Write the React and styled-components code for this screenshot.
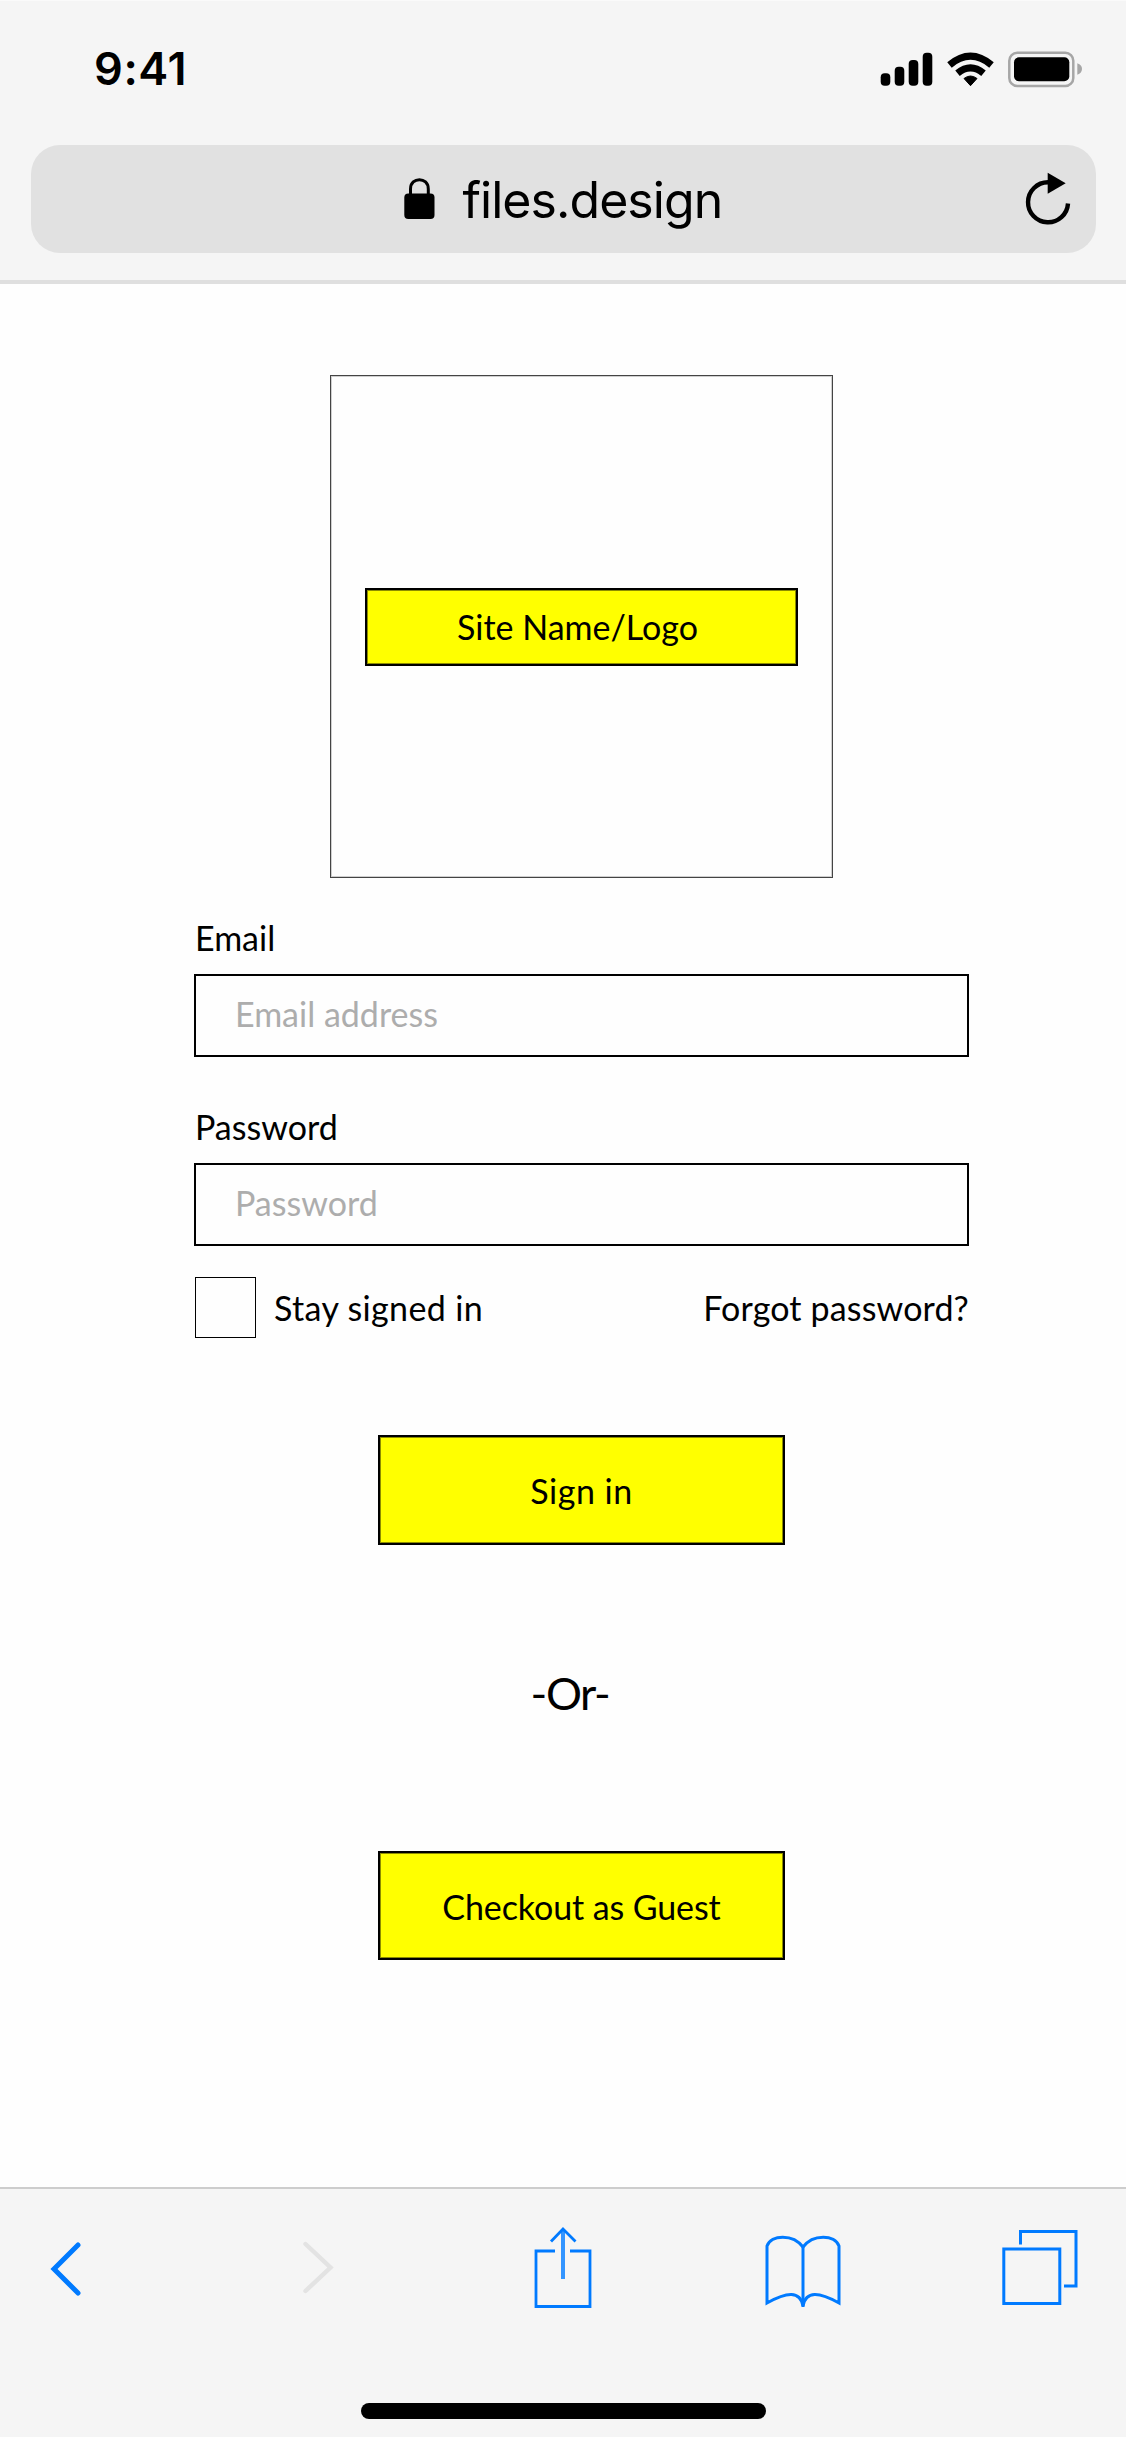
import React from "react";
import styled, { createGlobalStyle } from "styled-components";

const blue = "#007aff";

const GlobalStyle = createGlobalStyle`
  *, *::before, *::after { box-sizing: border-box; }
  body { margin: 0; background: #fefefe; }
`;

const Screen = styled.div`
  display: grid;
  grid-template-rows: 284px 1903px 250px;
  width: 1126px;
  height: 2437px;
  background: #fefefe;
  color: #000;
  font-family: Lato, "Noto Sans", sans-serif;
  font-size: 34px;
  line-height: 46px;
`;

const BrowserHeader = styled.header`
  display: flex;
  flex-direction: column;
  background: #f5f5f5;
  border-top: 1px solid #fafafa;
  border-bottom: 4px solid #dfdfdf;
`;

const StatusBar = styled.div`
  display: flex;
  justify-content: space-between;
  align-items: center;
  height: 136px;
  padding: 0 43px 0 94px;
`;

const Time = styled.span`
  font: 600 45px/60px Inter, sans-serif;
  letter-spacing: 0.6px;
`;

const AddressBar = styled.div`
  display: flex;
  align-items: center;
  height: 108px;
  margin: 7.5px 30.5px 0;
  padding: 0 25px 0 373px;
  border-radius: 29px;
  background: #e1e1e1;
`;

const Address = styled.span`
  margin: 2px auto 0 28px;
  font: 400 50px/60px Inter, sans-serif;
  letter-spacing: -0.95px;
`;

const Icon = styled.svg`
  display: block;
  flex: none;
  fill: none;
  stroke: ${(p) => p.$color || "none"};
  stroke-width: ${(p) => p.$weight || 0};
`;

const Main = styled.main`
  display: flex;
  flex-direction: column;
  align-items: center;
  padding: 91px 157px 0 194px;
`;

const LogoFrame = styled.div`
  display: flex;
  align-items: center;
  justify-content: center;
  width: 503px;
  height: 503px;
  border: 1px solid #444;
  box-shadow: inset 0 0 0 1px #cfcfcf;
`;

const YellowBox = styled.div`
  display: flex;
  align-items: center;
  justify-content: center;
  width: 433px;
  height: 78px;
  padding-right: 8px;
  border: 2px solid #000;
  box-shadow: inset 0 0 0 1px rgba(0, 0, 0, 0.45);
  background: #ff0;
`;

const Text = styled.span`
  white-space: nowrap;
  letter-spacing: ${(p) => p.$spacing || 0}px;
`;

const Form = styled.form`
  display: flex;
  flex-direction: column;
  align-items: center;
  width: 775px;
  margin-top: 37px;
`;

const Field = styled.label`
  display: flex;
  flex-direction: column;
  gap: 13px;
  width: 100%;
  margin-bottom: ${(p) => p.$after}px;
`;

const FieldName = styled.span`
  padding-left: 1px;
`;

const Input = styled.input`
  width: 100%;
  height: 83px;
  padding: 0 39px 5px;
  border: 2px solid #000;
  border-radius: 0;
  outline: none;
  background: #fefefe;
  font: inherit;
  &::placeholder { color: #adadad; opacity: 1; }
`;

const Options = styled.div`
  display: flex;
  align-items: center;
  width: 100%;
  height: 61px;
  padding-left: 1px;
`;

const Checkbox = styled.input`
  appearance: none;
  width: 61px;
  height: 61px;
  margin: 0 18px 0 0;
  border: 1px solid #000;
  background: #fefefe;
`;

const StaySignedIn = styled.label`
  display: flex;
  align-items: center;
  margin-right: auto;
`;

const ActionButton = styled.button`
  width: 407px;
  height: ${(p) => p.$height}px;
  margin-top: ${(p) => p.$before}px;
  padding: 2px 0 0;
  border: 2px solid #000;
  border-radius: 0;
  box-shadow: inset 0 0 0 1px rgba(0, 0, 0, 0.45);
  background: #ff0;
  color: #000;
  font: inherit;
`;

const Divider = styled.div`
  margin: 118px 23px 0 0;
  font-size: 45px;
  line-height: 60px;
  letter-spacing: -1.4px;
`;

const BottomBar = styled.footer`
  display: flex;
  flex-direction: column;
  justify-content: space-between;
  align-items: center;
  padding-bottom: 18px;
  border-top: 2px solid #cdcdcd;
  background: #f5f5f5;
`;

const Tools = styled.nav`
  display: grid;
  grid-template-columns: 250px 230px 230px 236px auto;
  width: 100%;
  padding: 31px 0 0 50px;
`;

const HomeIndicator = styled.div`
  width: 405px;
  height: 16px;
  border-radius: 8px;
  background: #000;
`;

export default function App() {
  return (
    <Screen>
      <GlobalStyle />
      <BrowserHeader>
        <StatusBar>
          <Time>9:41</Time>
          <Icon width="203" height="37" viewBox="880 51 203 37">
            <g fill="#000">
              <rect x="880.7" y="73.3" width="9.6" height="12.5" rx="4" />
              <rect x="894.7" y="66.7" width="9.6" height="19.1" rx="4" />
              <rect x="908.7" y="60" width="9.6" height="25.8" rx="4" />
              <rect x="922.7" y="52.7" width="9.6" height="33.1" rx="4" />
              <path d="M964 78.5Q970.5 73.5 977 78.5L970.5 85.7Z" stroke="#000" strokeWidth="1" strokeLinejoin="round" />
              <rect x="1014" y="57.3" width="55.3" height="24" rx="5" />
            </g>
            <g stroke="#000" strokeWidth="7">
              <path d="M949.5 65Q970.5 47.4 991.5 65" />
              <path d="M957.5 73.2Q970.5 62.4 983.5 73.2" />
            </g>
            <rect x="1009.3" y="52.7" width="64" height="33.3" rx="8" stroke="#a6a6a6" strokeWidth="2.5" />
            <path d="M1077.3 63.3Q1082 65 1082 69Q1082 73 1077.3 74.7Z" fill="#a6a6a6" />
          </Icon>
        </StatusBar>
        <AddressBar>
          <Icon width="31" height="42" viewBox="404 177 31 42">
            <rect x="404.3" y="192.5" width="30.2" height="25.5" rx="4" fill="#000" />
            <path d="M410.5 194V188C410.5 175.5 428.3 175.5 428.3 188V194" stroke="#000" strokeWidth="3" />
          </Icon>
          <Address>files.design</Address>
          <Icon width="46" height="54" viewBox="1025 171 46 54">
            <path d="M1068 202.5A20 20 0 1 1 1048 181.3" stroke="#000" strokeWidth="4.4" />
            <path d="M1047.7 171.7L1065.7 182.3L1047.7 192.7Z" fill="#000" />
          </Icon>
        </AddressBar>
      </BrowserHeader>

      <Main>
        <LogoFrame>
          <YellowBox><Text>Site Name/Logo</Text></YellowBox>
        </LogoFrame>
        <Form onSubmit={(e) => e.preventDefault()}>
          <Field $after={47}>
            <FieldName>Email</FieldName>
            <Input type="email" placeholder="Email address" />
          </Field>
          <Field $after={31}>
            <FieldName>Password</FieldName>
            <Input type="password" placeholder="Password" />
          </Field>
          <Options>
            <StaySignedIn>
              <Checkbox type="checkbox" />
              <Text $spacing={0.35}>Stay signed in</Text>
            </StaySignedIn>
            <Text $spacing={0.15}>Forgot password?</Text>
          </Options>
          <ActionButton $before={97} $height={110}><Text $spacing={0.5}>Sign in</Text></ActionButton>
          <Divider>-Or-</Divider>
          <ActionButton type="button" $before={128} $height={109}><Text $spacing={-0.1}>Checkout as Guest</Text></ActionButton>
        </Form>
      </Main>

      <BottomBar>
        <Tools>
          <Icon width="34" height="94" viewBox="51 2220 34 94" $color={blue} $weight={5}>
            <path d="M79 2245L55 2269L79 2293" strokeLinecap="round" />
          </Icon>
          <Icon width="36" height="94" viewBox="300.5 2219.5 36 94" $color="#e3e3e3" $weight={4.4}>
            <path d="M306 2243.5L331 2267L306 2290.5" strokeLinecap="round" />
          </Icon>
          <Icon width="66" height="94" viewBox="530 2220 66 94" $color={blue} $weight={2.8}>
            <path d="M555 2251H536V2306.5H590V2251H570" />
            <path d="M563 2279V2229" stroke="#3395ff" strokeWidth="4" />
            <path d="M551 2241.5L563 2229L575.5 2241.5" />
          </Icon>
          <Icon width="86" height="94" viewBox="760 2220 86 94" $color={blue} $weight={3}>
            <path d="M767 2303V2246C771 2234.5 793 2233.5 803 2247C813 2233.5 835 2234.5 839 2246V2303C819 2292 806 2290.5 803 2306C800 2290.5 787 2292 767 2303Z" />
            <path d="M803 2246V2307" />
          </Icon>
          <Icon width="86" height="94" viewBox="996 2220 86 94" $color={blue} $weight={3}>
            <rect x="1003.8" y="2249" width="56" height="54.5" />
            <path d="M1020.5 2244.5V2231.5H1076V2286H1064" />
          </Icon>
        </Tools>
        <HomeIndicator />
      </BottomBar>
    </Screen>
  );
}
